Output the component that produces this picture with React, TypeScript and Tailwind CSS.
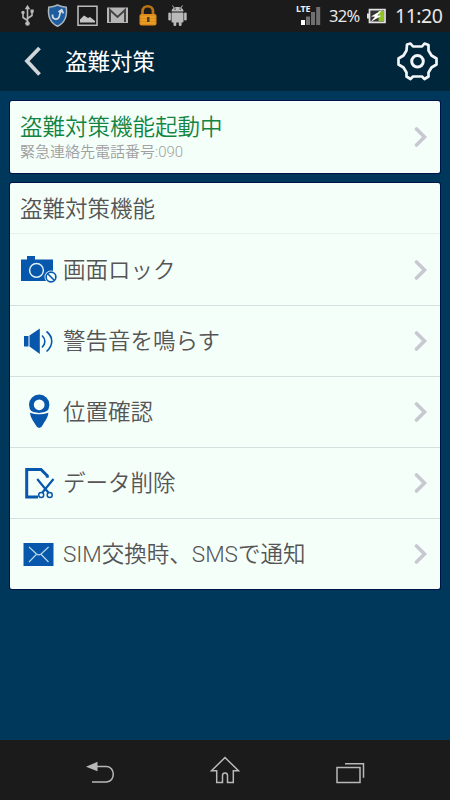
import type { ReactNode } from "react";

const blue = "#0758ad";

function Chevron() {
  return (
    <svg width="14" height="22" viewBox="0 0 14 22" className="mr-[12px] shrink-0">
      <path d="M2.500 3 L10.500 11 L2.500 19" fill="none" stroke="#c8c8d0" strokeWidth="3.600" strokeLinejoin="miter" strokeLinecap="round" />
    </svg>
  );
}

function CameraIcon() {
  return (
    <svg width="53" height="40" viewBox="10 250 53 40">
      <path d="M21 259.500h6v-3.500h8v3.500h18v21.500h-32z" fill={blue} />
      <circle cx="36.500" cy="270.300" r="6.900" fill="none" stroke="#dff1f2" strokeWidth="1.500" />
      <circle cx="51" cy="277" r="6.500" fill="#f5fffa" />
      <circle cx="51" cy="277" r="4.900" fill="none" stroke={blue} strokeWidth="1.600" />
      <path d="M47.500 273.500l7 7" stroke={blue} strokeWidth="1.600" />
    </svg>
  );
}

function SpeakerIcon() {
  return (
    <svg width="53" height="40" viewBox="10 321 53 40">
      <path d="M24 336h4.500v10.500h-4.500z" fill={blue} />
      <path d="M29.500 335.500l10.300-7v25.500l-10.300-7.500z" fill={blue} />
      <path d="M42 335.500c3.800 3.500 3.800 8.500 0 12M46.500 331.500c7 5.500 7 14 0 20" fill="none" stroke={blue} strokeWidth="1.600" />
    </svg>
  );
}

function PinIcon() {
  return (
    <svg width="53" height="40" viewBox="10 392 53 40">
      <circle cx="39.200" cy="404.800" r="7.800" fill="none" stroke={blue} strokeWidth="4.800" />
      <path d="M28 410.500q11 6.500 22 0" stroke="#f5fffa" strokeWidth="1.600" fill="none" />
      <path d="M30 412.700q9 3.600 18.400 0c-.5 5-3.400 8.100-5.700 12.300q-1.300 3-3.500 3t-3.500-3c-2.300-4.200-5.200-7.300-5.700-12.300z" fill={blue} />
    </svg>
  );
}

function CutIcon() {
  return (
    <svg width="53" height="40" viewBox="10 463 53 40">
      <path d="M38 497H26.700v-27.500H41l6.300 6.300v2" fill="none" stroke={blue} strokeWidth="3" />
      <path d="M37.200 479l11.500 14M53.500 479l-11.500 14" stroke={blue} strokeWidth="2.200" />
      <circle cx="41.200" cy="495" r="2.500" fill="#f5fffa" stroke={blue} strokeWidth="1.500" />
      <circle cx="49.700" cy="495" r="2.500" fill="#f5fffa" stroke={blue} strokeWidth="1.500" />
    </svg>
  );
}

function MailIcon() {
  return (
    <svg width="53" height="40" viewBox="10 534 53 40">
      <path d="M23.500 543h30v23h-30z" fill={blue} />
      <path d="M29 547l7.500 7q2.300 1.700 4.600 0l7.500-7M29 562l7.300-7.500M48.500 562l-7.300-7.500" fill="none" stroke="#bddbe8" strokeWidth="1.100" />
    </svg>
  );
}

const rows: { label: string; icon: ReactNode; box: string }[] = [
  { label: "画面ロック", icon: <CameraIcon />, box: "h-[72px] border-b border-[#d4dfdf]" },
  { label: "警告音を鳴らす", icon: <SpeakerIcon />, box: "h-[71px] border-b border-[#d4dfdf]" },
  { label: "位置確認", icon: <PinIcon />, box: "h-[71px] border-b border-[#d4dfdf]" },
  { label: "データ削除", icon: <CutIcon />, box: "h-[71px] border-b border-[#d4dfdf]" },
  { label: "SIM交換時、SMSで通知", icon: <MailIcon />, box: "h-[70px]" },
];

function StatusBar() {
  return (
    <div className="flex h-8 shrink-0 bg-[#1b1b1b] font-['Noto_Sans',sans-serif] text-[#e8e8e8]">
      <svg width="290" height="32" viewBox="0 0 290 32">
        <g fill="none" stroke="#b9b9b9" strokeWidth="1.600">
          <path d="M27.500 7v16M27.500 20.500l-4.500-3v-4M27.500 18.500l4.500-3v-4" />
        </g>
        <path d="M27.500 4.800l2.800 4.400h-5.600z" fill="#b9b9b9" />
        <circle cx="27.500" cy="23.500" r="2.300" fill="#b9b9b9" />
        <circle cx="23" cy="12.500" r="1.700" fill="#b9b9b9" />
        <path d="M30.500 9.500h3.200v3.200h-3.200z" fill="#b9b9b9" />
        <path d="M57.500 5q4 2 8.700 2.200c1.200 9-2 16-8.700 19-6.700-3-9.900-10-8.700-19Q53.500 7 57.500 5z" fill="#1d5c9e" stroke="#aeb6bc" strokeWidth="1.500" />
        <path d="M52.500 14.500c-.5 5 4.500 6 6.500 2.700 1.200-2.400.2-4.200 2.500-6M58.500 12l3.200-2.300 1.800 3.600" fill="none" stroke="#d1dce2" strokeWidth="1.700" />
        <path d="M78 6.200h19v19H78z" fill="none" stroke="#b9b9b9" strokeWidth="1.600" />
        <path d="M80 22.500v-3l4-4 4 2.500 2-1 5 4v1.500z" fill="#c5c5c5" />
        <path d="M107 7.500h21v15.500h-21z" fill="#b6b6b6" />
        <path d="M110 22v-12l7.500 7 7.500-7v12" fill="none" stroke="#444" strokeWidth="2" />
        <path d="M142.500 15v-3.500c0-7 10.500-7 10.500 0V15" fill="none" stroke="#b97315" strokeWidth="2.700" />
        <rect x="139.500" y="14" width="17" height="11.500" rx="2" fill="#de8d1d" />
        <path d="M141 17h14M141 20h14M141 23h14" stroke="#eeae2c" strokeWidth="1" />
        <path d="M147 17h2.500v5h-2.500z" fill="#533b16" />
        <g fill="#b9b9b9">
          <path d="M171.500 11.500c0-6 12-6 12 0z" />
          <rect x="171.500" y="12.500" width="12" height="10" rx="1" />
          <rect x="168.300" y="12.500" width="2.600" height="8" rx="1.200" />
          <rect x="184.100" y="12.500" width="2.600" height="8" rx="1.200" />
          <rect x="173.500" y="20" width="2.800" height="6" rx="1.200" />
          <rect x="178.800" y="20" width="2.800" height="6" rx="1.200" />
        </g>
        <path d="M172.500 5.500l2 3M182.500 5.500l-2 3" stroke="#b9b9b9" strokeWidth="1" />
        <path d="M174.500 9.200h1.200M179.500 9.200h1.200" stroke="#333" strokeWidth="1.200" />
      </svg>
      <svg width="38" height="32" viewBox="290 0 38 32">
        <text x="296" y="12" fontSize="9" fontWeight="700" fill="#eee" textLength="14.500">LTE</text>
        <path d="M301 20h4v5h-4z" fill="#fff" />
        <path d="M306 16.500h4V25h-4zM311 12h4v13h-4zM316.200 7h4v18h-4z" fill="#707070" />
      </svg>
      <span className="w-[38px] pl-[1px] pt-[4px] text-[16.500px] leading-6 tracking-[-0.700px]">32%</span>
      <svg width="28" height="32" viewBox="366 0 28 32">
        <path d="M367 13.500h2v5h-2z" fill="#ddd" />
        <path d="M369.500 9.700h15.500v12.700h-15.500z" fill="#333" stroke="#e3e3e3" strokeWidth="1.700" />
        <path d="M378.500 11h5.500v10.200h-5.500z" fill="#8fc31f" />
        <path d="M382 10l-11 6.500 4 .2-4.500 5.300 11-6.300-4-.2z" fill="#fff" />
      </svg>
      <span className="pl-[1px] pt-[4px] text-[19.500px] leading-6 tracking-[-0.500px]">11:20</span>
    </div>
  );
}

export default function App() {
  return (
    <div className="flex h-[800px] w-[450px] flex-col overflow-hidden bg-[#00385b] font-[Roboto,'Noto_Sans_CJK_JP',sans-serif]">
      <StatusBar />
      <header className="flex h-[59px] shrink-0 items-center bg-[#00263b]">
        <svg width="65" height="59" viewBox="0 32 65 59">
          <path d="M39.500 48L27 61l12.500 13.500" fill="none" stroke="#d0d5da" strokeWidth="3.800" />
        </svg>
        <h1 className="flex-1 text-[22.500px] leading-8 text-white">盗難対策</h1>
        <svg width="60" height="59" viewBox="390 32 60 59">
          <path d="M407 44.500L410.500 43.500L413 46.500H422L424.500 43.500L428.500 45L428.500 50.500L431.500 55.500L436.500 58.500V64.500L431.500 67.500L428.500 72.500V76.500L424.500 79L422 76.500H413L410.500 79L406.500 76.500V72.500L403.500 67.500L398.500 64.500V58.500L403.500 55.500L406.500 50.500Z" fill="none" stroke="#f3f6f8" strokeWidth="2.700" strokeLinejoin="round" />
          <circle cx="417.500" cy="61.300" r="5.800" fill="none" stroke="#f3f6f8" strokeWidth="3" />
        </svg>
      </header>
      <main className="flex flex-1 flex-col gap-[10px] px-[10px] pt-[10px]">
        <section className="flex h-[72px] items-center rounded-[2px] bg-[#f5fffa] pl-[10px] ring-1 ring-[#00134a]">
          <div className="flex-1 pt-[2px]">
            <p className="text-[22.500px] font-[350] leading-[28px] text-[#138543]">盗難対策機能起動中</p>
            <p className="text-[15px] font-[350] leading-[22px] text-[#a0a0a0]">緊急連絡先電話番号:090</p>
          </div>
          <Chevron />
        </section>
        <section className="h-[406px] rounded-[2px] bg-[#f5fffa] text-[22.500px] font-[350] text-[#555] ring-1 ring-[#00134a]">
          <h2 className="flex h-[51px] items-center border-b border-[#e8f1ee] pl-[10px] pt-[4px] font-[350]">盗難対策機能</h2>
          {rows.map((row) => (
            <div key={row.label} className={`flex items-center ${row.box}`}>
              <div className="w-[53px] shrink-0">{row.icon}</div>
              <span className="flex-1 whitespace-nowrap pt-[2px]">{row.label}</span>
              <Chevron />
            </div>
          ))}
        </section>
      </main>
      <nav className="h-[60px] shrink-0 bg-[#1b1b1b]">
        <svg width="450" height="60" viewBox="0 740 450 60" fill="none" stroke="#b9b9b9" strokeWidth="1.500">
          <path d="M86 766.800l11.500-5v9.500z" fill="#b9b9b9" stroke="none" />
          <path d="M97 766.500h9.500c9 0 9 15.500 0 15.500H92" />
          <path d="M225 757.500l-13.500 13.300h5.200v11.700h5.800v-7c0-3.500 5-3.500 5 0v7h5.800v-11.700h5.200z" />
          <path d="M337 767.500h23v15h-23zM345 763.700h18.500v14" />
        </svg>
      </nav>
    </div>
  );
}
